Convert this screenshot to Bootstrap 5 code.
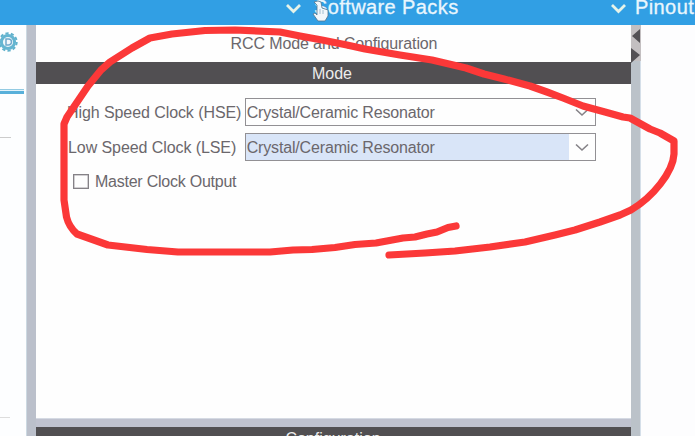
<!DOCTYPE html>
<html lang="en">
<head>
<meta charset="utf-8">
<title>RCC Mode and Configuration</title>
<link href="https://cdn.jsdelivr.net/npm/bootstrap@5.3.0/dist/css/bootstrap.min.css" rel="stylesheet">
<style>
body{width:695px;height:436px;font-family:"Liberation Sans",Arial,sans-serif;font-size:16px;line-height:20px;color:#6b676c;background:#fdfdfe}
.topbar{height:25px;background:#319fe4;color:#e9f6fd;font-size:20px;line-height:24px;letter-spacing:.4px;-webkit-text-stroke:.3px #e9f6fd}
.topbar .menu-a{padding-left:285px;width:610px;margin-top:-11px}
.topbar .menu-b{margin-top:-11px}
.menu-a svg,.menu-b svg{width:17px;height:12px;margin-top:3px}
.side{width:26px;background:#fdfeff}
.gear{width:20px;height:22px;margin-top:6px}
.tabline{width:24px;height:5px;margin-top:36px;border-top:1px solid #93cbe3;border-bottom:3px solid #58b0da;background:#e3f3fa}
.rule-a{width:11px;height:1px;margin-top:43px;background:#ccc}
.rule-b{width:10px;height:1px;margin-top:279px;background:#ddd}
.splitter{width:10px;background:#bbc0cb;border-left:1px solid #ccd9e2}
.splitter-r{width:10px;background:#bbc2c9;border-right:1px solid #d5dfe9}
.main-col{width:595px}
.pane{height:393px;background:#fefefe}
.pane-title{height:37px;padding-top:9px;padding-left:1px;letter-spacing:-.12px}
.band{height:22px;background:#514f52;color:#ececec;line-height:23px;padding-right:3px}
.band-b{height:9px;line-height:24px;padding-right:1px}
.hsplit{height:9px;background:#bfc2cf;border-top:1px solid #d5dae3}
.fields{padding:14px 35px 0 31px}
.lbl{width:178px;padding-top:1px;letter-spacing:-.08px}
.lbl-b{padding-left:1px}
.combo{width:352px;height:28px;border:1px solid #929094;padding-left:1px;background:#fefefe}
.combo .val{height:26px;line-height:28px;letter-spacing:-.16px}
.combo svg{width:14px;height:9px;margin-right:6px}
.combo.sel .val{background:#d9e5f8;width:323px;margin-left:-1px;padding-left:1px}
.gap-row{margin-top:7px}
.check-row{padding-left:6px;margin-top:10px;height:20px;letter-spacing:-.24px}
.check-row .t-mco{padding-top:1px}
.box{width:16px;height:15px;border:1px solid #858287;box-shadow:inset 0 0 0 .5px #a5a2a7;margin-right:6px}
.over{left:0;top:0;pointer-events:none}
</style>
</head>
<body class="position-relative overflow-hidden d-flex flex-column">
<header class="topbar d-flex flex-shrink-0 overflow-hidden text-nowrap">
  <div class="menu-a d-flex align-items-center"><svg viewBox="0 0 17 12"><path d="M2 2l6.500 6.500L15 2" fill="none" stroke="#e6f3e9" stroke-width="2.800"/></svg><span class="ms-2 ps-1">Software Packs</span></div>
  <div class="menu-b d-flex align-items-center"><svg viewBox="0 0 17 12"><path d="M2 2l6.500 6.500L15 2" fill="none" stroke="#e6f3e9" stroke-width="2.800"/></svg><span class="ms-2">Pinout</span></div>
</header>
<main class="d-flex flex-grow-1">
  <aside class="side">
    <svg class="gear d-block" viewBox="0 0 20 22"><circle cx="8" cy="11" r="8.700" fill="none" stroke="#62b2cc" stroke-width="2" stroke-dasharray="3.200 2.250"/><circle cx="8" cy="11" r="6.600" fill="#eef7fa" stroke="#65b5d1" stroke-width="3"/><path d="M6 8h2.500a3 3 0 0 1 0 6H6z" fill="#f5f8fc" stroke="#71a9cc" stroke-width="1.500"/></svg>
    <div class="tabline"></div><div class="rule-a"></div><div class="rule-b"></div>
  </aside>
  <div class="splitter"></div>
  <section class="main-col text-nowrap">
    <div class="pane">
      <div class="pane-title text-center">RCC Mode and Configuration</div>
      <div class="band text-center">Mode</div>
      <div class="fields">
        <div class="d-flex align-items-center"><span class="lbl">High Speed Clock (HSE)</span>
          <div class="combo d-flex align-items-center justify-content-between"><span class="val">Crystal/Ceramic Resonator</span><svg viewBox="0 0 14 9"><path d="M1 1.500l6 5.500 6-5.500" fill="none" stroke="#858287" stroke-width="1.600"/></svg></div></div>
        <div class="d-flex align-items-center gap-row"><span class="lbl lbl-b">Low Speed Clock (LSE)</span>
          <div class="combo sel d-flex align-items-center justify-content-between"><span class="val">Crystal/Ceramic Resonator</span><svg viewBox="0 0 14 9"><path d="M1 1.500l6 5.500 6-5.500" fill="none" stroke="#858287" stroke-width="1.600"/></svg></div></div>
        <div class="check-row d-flex align-items-center"><span class="box"></span><span class="t-mco">Master Clock Output</span></div>
      </div>
    </div>
    <div class="hsplit"></div>
    <div class="band band-b text-center overflow-hidden">Configuration</div>
  </section>
  <div class="splitter-r"><svg class="d-block" width="10" height="42" viewBox="0 0 10 42"><path d="M0 0h10v36H0z" fill="#c3bfc1"/><path d="M9 4v14L1 11zM0 23v15l9-8z" fill="#545155"/></svg></div>
</main>
<svg class="over position-absolute" width="695" height="436" viewBox="0 0 695 436">
  <path d="M314 2l4-1 3 1 1 6 6 2v6l-3 5h-7l-5-7 2-1 2 2V5z" fill="#f1f7fb" stroke="#53758d" stroke-width=".8"/><path d="M320 9v5M323 10v4" stroke="#8eb0c6" stroke-width=".8"/>
  <path d="M456 226L448 227.500 437 232 427 234 415 237 403 238 376 243 355 244.500 335 247.500 312 249.500 293 250 270 252H178L147 249.500 108 245 77 234Q69 227 66.500 217L64 200V124L67 117 88 86 101 70 110 62 132 48 150 38 172 34 205 30.500 235 30 280 32 300 36 322 40 347 45 365 49 400 55 432 60 466 68 484 74 504 79 530 86 547 92 563 98 583 106 605 112 623 117 630 118 650 129 660 133 674 141V154C673 172 653 197 631 210L620 215 600 222 575 230 555 235 525 242 490 247 455 251 425 253 389 255" fill="none" stroke="#fb3838" stroke-width="7.200" stroke-linecap="round" stroke-linejoin="round"/>
</svg>
<script src="https://cdn.jsdelivr.net/npm/bootstrap@5.3.0/dist/js/bootstrap.bundle.min.js"></script>
</body>
</html>
